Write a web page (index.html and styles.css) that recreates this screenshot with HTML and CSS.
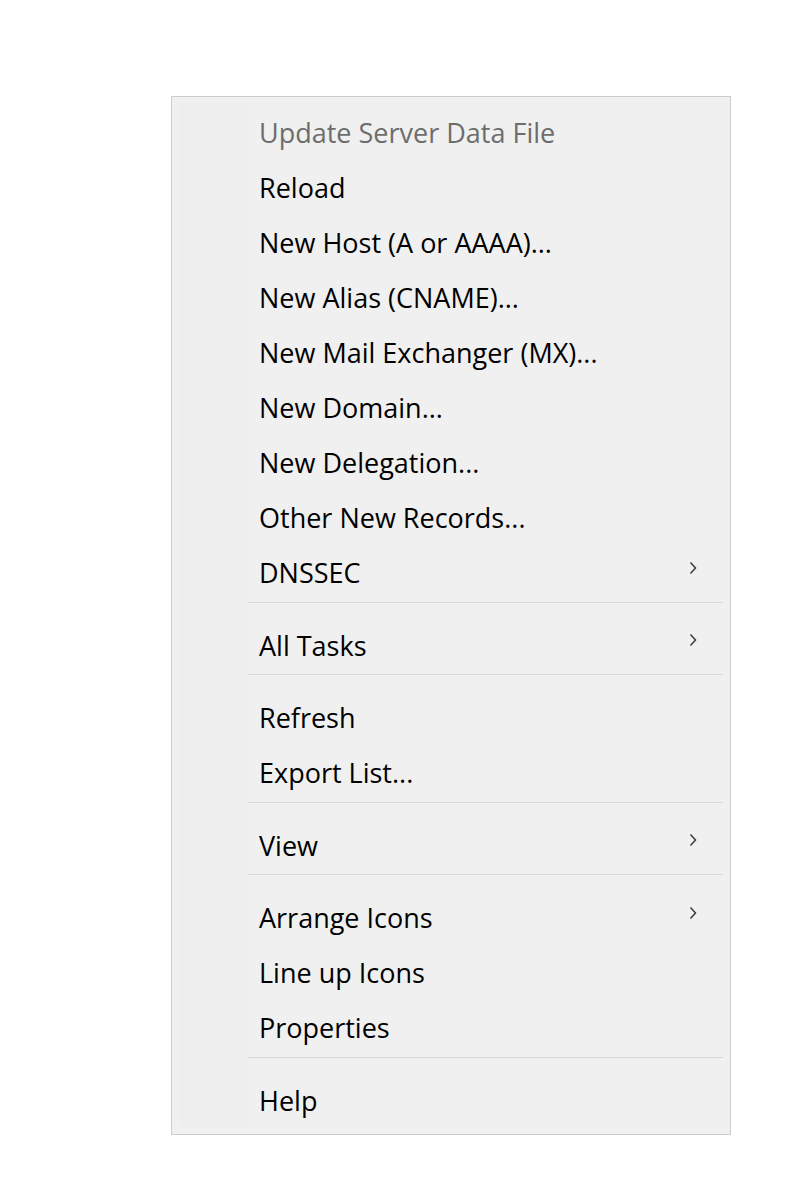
FILE: index.html
```html
<!DOCTYPE html>
<html lang="en">
<head>
<meta charset="utf-8">
<title>Context menu</title>
<link rel="stylesheet" href="styles.css">
</head>
<body>
<div class="menu">
  <div class="item disabled"><span class="label">Update Server Data File</span></div>
  <div class="item"><span class="label">Reload</span></div>
  <div class="item"><span class="label">New Host (A or AAAA)...</span></div>
  <div class="item"><span class="label">New Alias (CNAME)...</span></div>
  <div class="item"><span class="label">New Mail Exchanger (MX)...</span></div>
  <div class="item"><span class="label">New Domain...</span></div>
  <div class="item"><span class="label">New Delegation...</span></div>
  <div class="item"><span class="label">Other New Records...</span></div>
  <div class="item"><span class="label">DNSSEC</span><svg class="chev" width="8" height="14" viewBox="0 0 8 14"><path d="M1.5 1.5 L6.5 7 L1.5 12.5" fill="none" stroke="#3a3a3a" stroke-width="1.5"/></svg></div>
  <div class="sep"></div>
  <div class="item"><span class="label">All Tasks</span><svg class="chev" width="8" height="14" viewBox="0 0 8 14"><path d="M1.5 1.5 L6.5 7 L1.5 12.5" fill="none" stroke="#3a3a3a" stroke-width="1.5"/></svg></div>
  <div class="sep"></div>
  <div class="item"><span class="label">Refresh</span></div>
  <div class="item"><span class="label">Export List...</span></div>
  <div class="sep"></div>
  <div class="item"><span class="label">View</span><svg class="chev" width="8" height="14" viewBox="0 0 8 14"><path d="M1.5 1.5 L6.5 7 L1.5 12.5" fill="none" stroke="#3a3a3a" stroke-width="1.5"/></svg></div>
  <div class="sep"></div>
  <div class="item"><span class="label">Arrange Icons</span><svg class="chev" width="8" height="14" viewBox="0 0 8 14"><path d="M1.5 1.5 L6.5 7 L1.5 12.5" fill="none" stroke="#3a3a3a" stroke-width="1.5"/></svg></div>
  <div class="item"><span class="label">Line up Icons</span></div>
  <div class="item"><span class="label">Properties</span></div>
  <div class="sep"></div>
  <div class="item"><span class="label">Help</span></div>
</div>
</body>
</html>
```
FILE: styles.css
```css
html, body {
  margin: 0;
  padding: 0;
  background: #ffffff;
}
body {
  padding: 96px 0 0 171px;
  font-family: "Open Sans", "Noto Sans", sans-serif;
}
.menu {
  box-sizing: border-box;
  width: 560px;
  border: 1px solid #cdcdcd;
  background-color: #f0f0f0;
  padding: 7px;
  background-image: linear-gradient(#eeeeee, #eeeeee);
  background-repeat: no-repeat;
  background-position: 8px 8px;
  background-size: 69px calc(100% - 16px);
  background-origin: border-box;
}
.item {
  height: 55px;
  display: flex;
  align-items: center;
  padding-left: 80px;
  padding-right: 26px;
  font-size: 27px;
  color: #000000;
}
.item .label {
  flex: 1;
  line-height: 1;
  padding-top: 2px;
}
.item.disabled {
  color: #6d6d6d;
}
.chev {
  display: block;
  margin-top: -8px;
}
.sep {
  height: 1px;
  margin: 2.5px 0 14px 69px;
  background: #d7d7d7;
}
```
